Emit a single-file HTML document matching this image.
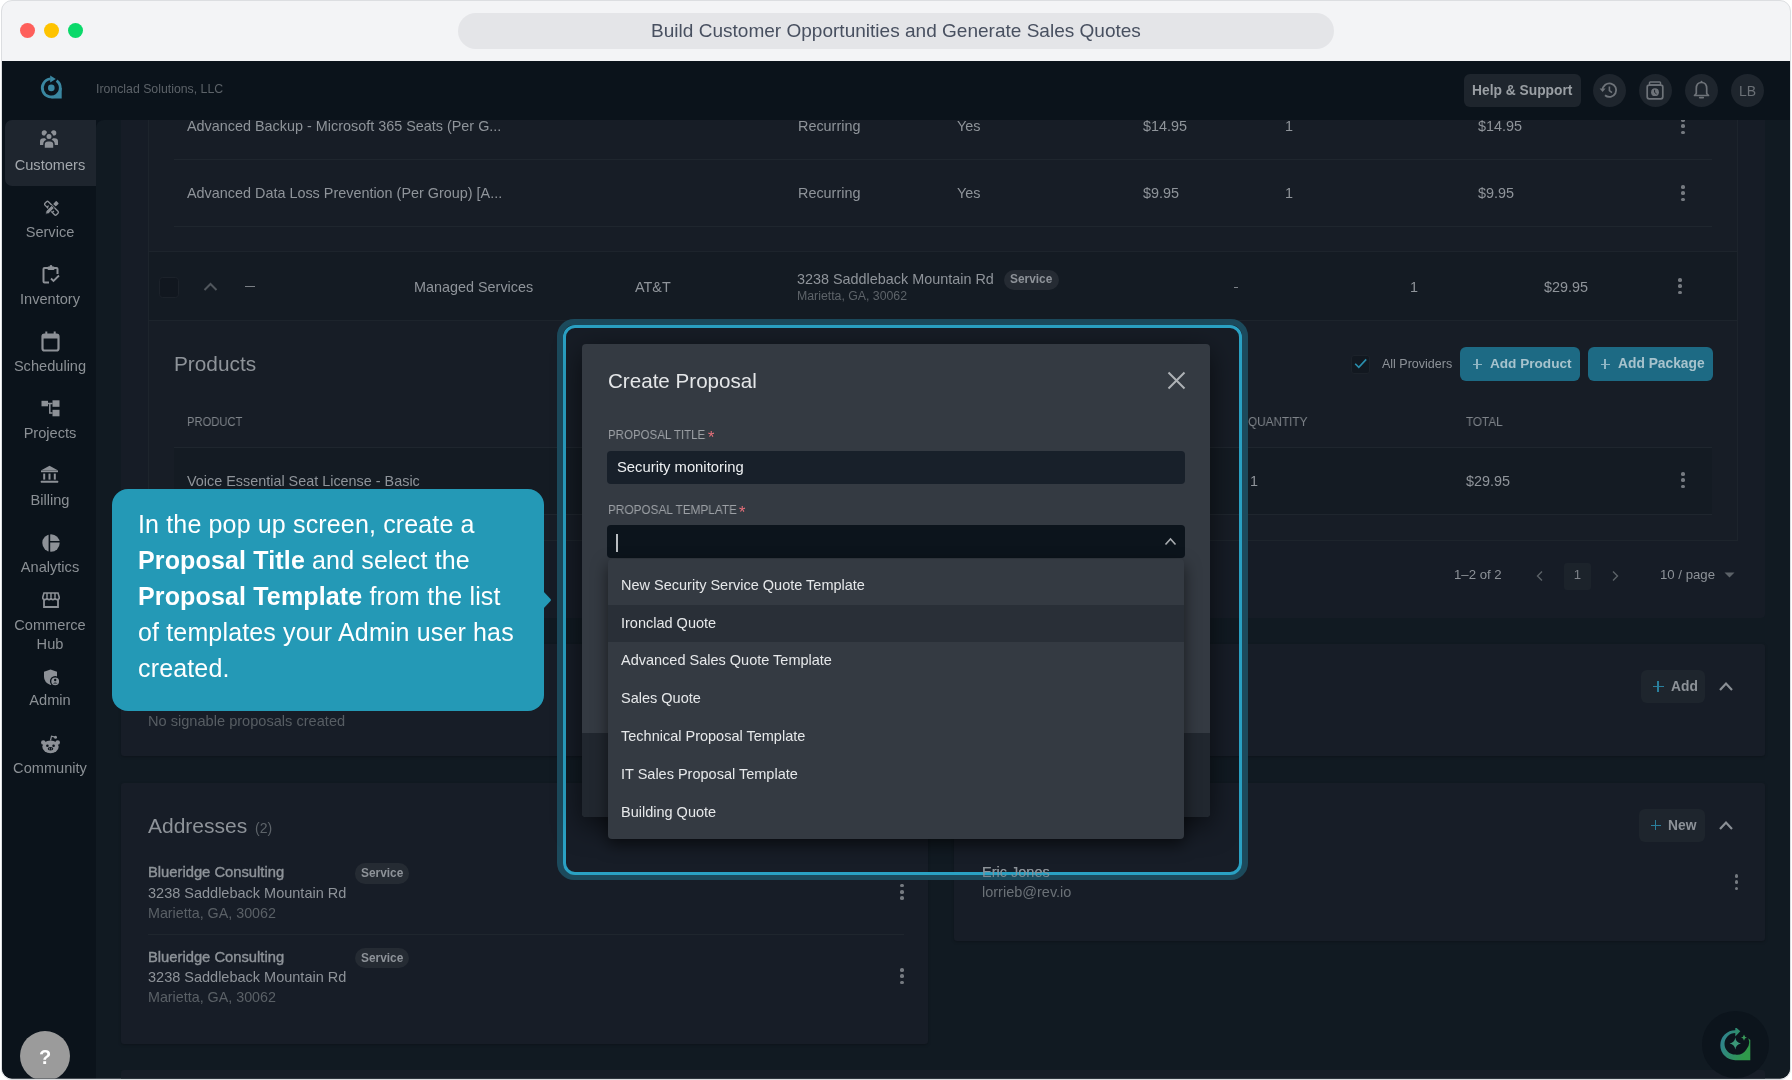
<!DOCTYPE html>
<html><head><meta charset="utf-8">
<style>
*{margin:0;padding:0;box-sizing:border-box}
html,body{width:1792px;height:1080px;overflow:hidden;background:#fff;font-family:"Liberation Sans",sans-serif}
.a{position:absolute}
.t{position:absolute;white-space:nowrap;will-change:transform}
</style></head><body>

<div class="a" style="left:1px;top:0px;width:1790px;height:1080px;border-radius:11px;background:#f3f4f6;border:1px solid #dcdee1"></div>
<div class="a" style="left:20.0px;top:22.5px;width:15px;height:15px;border-radius:50%;background:#fe5f5b"></div>
<div class="a" style="left:44.0px;top:22.5px;width:15px;height:15px;border-radius:50%;background:#fec300"></div>
<div class="a" style="left:68.0px;top:22.5px;width:15px;height:15px;border-radius:50%;background:#0ad96a"></div>
<div class="a" style="left:458px;top:13px;width:876px;height:36px;background:#e4e5e8;border-radius:18px;"></div>
<div class="t" style="left:546.0px;width:700px;text-align:center;top:17.10px;font-size:19.05px;line-height:27px;color:#485060;">Build Customer Opportunities and Generate Sales Quotes</div>
<div class="a" style="left:0;top:0;width:1792px;height:1080px;overflow:hidden;clip-path:inset(61px 2px 1.5px 2px round 0 0 10px 10px);background:#0b131b">
<div class="a" style="left:96px;top:120px;width:1696px;height:960px;background:#111a22;border-radius:0px;border-top-left-radius:8px"></div>
<div class="a" style="left:121px;top:100px;width:1644px;height:518px;background:#161c26;border-radius:4px;"></div>
<div class="a" style="left:148px;top:100px;width:1590px;height:152px;background:#171d26;border-radius:0px;border:1px solid #1d242c;border-top:none"></div>
<div class="t" style="left:186.6px;top:116.01px;font-size:14.4px;line-height:20px;color:#8f949a;">Advanced Backup - Microsoft 365 Seats (Per G...</div>
<div class="t" style="left:798px;top:116.01px;font-size:14.4px;line-height:20px;color:#8f949a;">Recurring</div>
<div class="t" style="left:957px;top:116.01px;font-size:14.4px;line-height:20px;color:#8f949a;">Yes</div>
<div class="t" style="left:1143px;top:116.01px;font-size:14.4px;line-height:20px;color:#8f949a;">$14.95</div>
<div class="t" style="left:1285px;top:116.01px;font-size:14.4px;line-height:20px;color:#8f949a;">1</div>
<div class="t" style="left:1478px;top:116.01px;font-size:14.4px;line-height:20px;color:#8f949a;">$14.95</div>
<div class="t" style="left:186.6px;top:183.01px;font-size:14.4px;line-height:20px;color:#8f949a;">Advanced Data Loss Prevention (Per Group) [A...</div>
<div class="t" style="left:798px;top:183.01px;font-size:14.4px;line-height:20px;color:#8f949a;">Recurring</div>
<div class="t" style="left:957px;top:183.01px;font-size:14.4px;line-height:20px;color:#8f949a;">Yes</div>
<div class="t" style="left:1143px;top:183.01px;font-size:14.4px;line-height:20px;color:#8f949a;">$9.95</div>
<div class="t" style="left:1285px;top:183.01px;font-size:14.4px;line-height:20px;color:#8f949a;">1</div>
<div class="t" style="left:1478px;top:183.01px;font-size:14.4px;line-height:20px;color:#8f949a;">$9.95</div>
<div class="a" style="left:174px;top:159px;width:1538px;height:1px;background:#1f262e;border-radius:0px;"></div>
<div class="a" style="left:174px;top:226px;width:1538px;height:1px;background:#1f262e;border-radius:0px;"></div>
<div class="a" style="left:1681.15px;top:118.15px;width:3.7px;height:3.7px;border-radius:50%;background:#757a80"></div>
<div class="a" style="left:1681.15px;top:124.45px;width:3.7px;height:3.7px;border-radius:50%;background:#757a80"></div>
<div class="a" style="left:1681.15px;top:130.75px;width:3.7px;height:3.7px;border-radius:50%;background:#757a80"></div>
<div class="a" style="left:1681.15px;top:185.15px;width:3.7px;height:3.7px;border-radius:50%;background:#757a80"></div>
<div class="a" style="left:1681.15px;top:191.45000000000002px;width:3.7px;height:3.7px;border-radius:50%;background:#757a80"></div>
<div class="a" style="left:1681.15px;top:197.75px;width:3.7px;height:3.7px;border-radius:50%;background:#757a80"></div>
<div class="a" style="left:148px;top:252px;width:1590px;height:69px;background:#141b23;border-radius:0px;border:1px solid #1d242c;border-top:none"></div>
<div class="a" style="left:158.8px;top:277.2px;width:20px;height:20.5px;background:#11171f;border-radius:3.5px;border:1px solid #1c222a"></div>
<svg class="a" style="left:203px;top:282px" width="15" height="10" viewBox="0 0 15 10"><path d="M1.5 8 L7.5 2 L13.5 8" fill="none" stroke="#50565c" stroke-width="2"/></svg>
<div class="a" style="left:244.5px;top:286.2px;width:10px;height:1.3px;background:#7a7f85;border-radius:0px;"></div>
<div class="t" style="left:414px;top:277.01px;font-size:14.4px;line-height:20px;color:#8f949a;">Managed Services</div>
<div class="t" style="left:635px;top:277.01px;font-size:14.4px;line-height:20px;color:#8f949a;">AT&amp;T</div>
<div class="t" style="left:797.3px;top:268.76px;font-size:14.4px;line-height:20px;color:#8f949a;">3238 Saddleback Mountain Rd</div>
<div class="a" style="left:1004px;top:269.5px;width:55px;height:20.5px;background:#252b33;border-radius:10px;"></div>
<div class="t" style="left:1010.4px;top:271.13px;font-size:11.9px;line-height:17px;color:#8d9298;font-weight:bold;">Service</div>
<div class="t" style="left:797.3px;top:287.94px;font-size:12.3px;line-height:17px;color:#5d6369;">Marietta, GA, 30062</div>
<div class="a" style="left:1234px;top:287px;width:3.6px;height:1.4px;background:#7d8288;border-radius:0px;"></div>
<div class="t" style="left:1409.5px;top:277.01px;font-size:14.4px;line-height:20px;color:#8f949a;">1</div>
<div class="t" style="left:1544px;top:277.01px;font-size:14.4px;line-height:20px;color:#8f949a;">$29.95</div>
<div class="a" style="left:1678.45px;top:278.15px;width:3.7px;height:3.7px;border-radius:50%;background:#757a80"></div>
<div class="a" style="left:1678.45px;top:284.45px;width:3.7px;height:3.7px;border-radius:50%;background:#757a80"></div>
<div class="a" style="left:1678.45px;top:290.75px;width:3.7px;height:3.7px;border-radius:50%;background:#757a80"></div>
<div class="a" style="left:148px;top:320px;width:1590px;height:221px;background:#171d26;border-radius:0px;border:1px solid #1d242c"></div>
<div class="t" style="left:174px;top:349.19px;font-size:20.8px;line-height:29px;color:#8e9399;">Products</div>
<div class="a" style="left:1351px;top:354.5px;width:19px;height:19px;background:#121820;border-radius:3px;border:1px solid #1c222a"></div>
<svg class="a" style="left:1351px;top:354px" width="19" height="19" viewBox="0 0 19 19"><path d="M4.2 9.8 L7.8 13.4 L15.2 5.4" fill="none" stroke="#2a8fae" stroke-width="1.6"/></svg>
<div class="t" style="left:1381.7px;top:354.67px;font-size:12.5px;line-height:18px;color:#8d9298;">All Providers</div>
<div class="a" style="left:1460px;top:347px;width:120px;height:34px;background:#1d6a84;border-radius:6px;"></div>
<div class="a" style="left:1588px;top:347px;width:124.5px;height:34px;background:#1d6a84;border-radius:6px;"></div>
<div class="a" style="left:1472.5px;top:363.5px;width:9.5px;height:1.8px;background:#8fb6c4;border-radius:0px;"></div>
<div class="a" style="left:1476.4px;top:359px;width:1.8px;height:10px;background:#8fb6c4;border-radius:0px;"></div>
<div class="a" style="left:1600.5px;top:363.5px;width:9.5px;height:1.8px;background:#8fb6c4;border-radius:0px;"></div>
<div class="a" style="left:1604.4px;top:359px;width:1.8px;height:10px;background:#8fb6c4;border-radius:0px;"></div>
<div class="t" style="left:1489.7px;top:354.49px;font-size:13.6px;line-height:19px;color:#a7c3cd;font-weight:bold;">Add Product</div>
<div class="t" style="left:1617.5px;top:354.42px;font-size:13.8px;line-height:19px;color:#a7c3cd;font-weight:bold;">Add Package</div>
<div class="t" style="left:186.6px;top:412.86px;font-size:12.8px;line-height:18px;color:#7f848a;transform:scaleX(0.875);transform-origin:0 0;">PRODUCT</div>
<div class="t" style="left:1248.4px;top:412.86px;font-size:12.8px;line-height:18px;color:#7f848a;transform:scaleX(0.918);transform-origin:0 0;">QUANTITY</div>
<div class="t" style="left:1466px;top:412.86px;font-size:12.8px;line-height:18px;color:#7f848a;transform:scaleX(0.913);transform-origin:0 0;">TOTAL</div>
<div class="a" style="left:174px;top:447px;width:1538px;height:1px;background:#1f262e;border-radius:0px;"></div>
<div class="a" style="left:174px;top:448px;width:1538px;height:66px;background:#141b23;border-radius:0px;"></div>
<div class="a" style="left:174px;top:514px;width:1538px;height:1px;background:#1f262e;border-radius:0px;"></div>
<div class="t" style="left:186.6px;top:471.01px;font-size:14.4px;line-height:20px;color:#8f949a;">Voice Essential Seat License - Basic</div>
<div class="t" style="left:1249.8px;top:471.01px;font-size:14.4px;line-height:20px;color:#8f949a;">1</div>
<div class="t" style="left:1466px;top:471.01px;font-size:14.4px;line-height:20px;color:#8f949a;">$29.95</div>
<div class="a" style="left:1681.15px;top:472.15px;width:3.7px;height:3.7px;border-radius:50%;background:#757a80"></div>
<div class="a" style="left:1681.15px;top:478.45px;width:3.7px;height:3.7px;border-radius:50%;background:#757a80"></div>
<div class="a" style="left:1681.15px;top:484.75px;width:3.7px;height:3.7px;border-radius:50%;background:#757a80"></div>
<div class="t" style="left:1453.5px;top:566.43px;font-size:13.2px;line-height:18px;color:#8d9298;">1–2 of 2</div>
<svg class="a" style="left:1535px;top:570px" width="10" height="12" viewBox="0 0 10 12"><path d="M7 1.5 L2.5 6 L7 10.5" fill="none" stroke="#5c6268" stroke-width="1.4"/></svg>
<div class="a" style="left:1564px;top:562.5px;width:27px;height:27px;background:#1c232b;border-radius:3px;"></div>
<div class="t" style="left:1563.5px;width:27px;text-align:center;top:566.43px;font-size:13.2px;line-height:18px;color:#7e8389;">1</div>
<svg class="a" style="left:1610px;top:570px" width="10" height="12" viewBox="0 0 10 12"><path d="M3 1.5 L7.5 6 L3 10.5" fill="none" stroke="#5c6268" stroke-width="1.4"/></svg>
<div class="t" style="left:1660px;top:566.43px;font-size:13.2px;line-height:18px;color:#8d9298;">10 / page</div>
<svg class="a" style="left:1724px;top:572px" width="11" height="6" viewBox="0 0 11 6"><path d="M0.5 0.5 L10.5 0.5 L5.5 5.5 Z" fill="#5c6268"/></svg>
<div class="a" style="left:121px;top:643.6px;width:1644px;height:112px;background:#171d27;border-radius:3px;box-shadow:0 1px 3px rgba(0,0,0,0.25)"></div>
<div class="t" style="left:148px;top:711.44px;font-size:14.6px;line-height:20px;color:#575d63;">No signable proposals created</div>
<div class="a" style="left:1641.4px;top:670px;width:64px;height:33.3px;background:#1e252d;border-radius:6px;"></div>
<div class="a" style="left:1652.8px;top:685.5px;width:10.8px;height:1.6px;background:#2a7f9c;border-radius:0px;"></div>
<div class="a" style="left:1657.4px;top:681px;width:1.6px;height:10.8px;background:#2a7f9c;border-radius:0px;"></div>
<div class="t" style="left:1670.7px;top:677.32px;font-size:13.8px;line-height:19px;color:#8d9298;font-weight:bold;">Add</div>
<svg class="a" style="left:1718px;top:680px" width="16" height="12" viewBox="0 0 16 12"><path d="M2 10 L8 3.5 L14 10" fill="none" stroke="#8a8f95" stroke-width="2.2"/></svg>
<div class="a" style="left:121px;top:782.8px;width:807px;height:261px;background:#171d27;border-radius:3px;box-shadow:0 1px 3px rgba(0,0,0,0.25)"></div>
<div class="t" style="left:148px;top:811.47px;font-size:21px;line-height:29px;color:#8e9399;">Addresses</div>
<div class="t" style="left:255px;top:818.40px;font-size:14px;line-height:20px;color:#5d6369;">(2)</div>
<div class="t" style="left:148px;top:862.39px;font-size:14.75px;line-height:21px;color:#8e9399;-webkit-text-stroke:0.4px #8e9399">Blueridge Consulting</div>
<div class="a" style="left:355px;top:863.25px;width:54px;height:20.5px;background:#252b33;border-radius:10px;"></div>
<div class="t" style="left:361px;top:865.38px;font-size:11.9px;line-height:17px;color:#8d9298;font-weight:bold;">Service</div>
<div class="t" style="left:148px;top:882.98px;font-size:14.5px;line-height:20px;color:#8e9399;">3238 Saddleback Mountain Rd</div>
<div class="t" style="left:148px;top:902.55px;font-size:14.3px;line-height:20px;color:#5a6066;">Marietta, GA, 30062</div>
<div class="a" style="left:900.15px;top:883.65px;width:3.7px;height:3.7px;border-radius:50%;background:#757a80"></div>
<div class="a" style="left:900.15px;top:889.9499999999999px;width:3.7px;height:3.7px;border-radius:50%;background:#757a80"></div>
<div class="a" style="left:900.15px;top:896.25px;width:3.7px;height:3.7px;border-radius:50%;background:#757a80"></div>
<div class="t" style="left:148px;top:946.89px;font-size:14.75px;line-height:21px;color:#8e9399;-webkit-text-stroke:0.4px #8e9399">Blueridge Consulting</div>
<div class="a" style="left:355px;top:947.75px;width:54px;height:20.5px;background:#252b33;border-radius:10px;"></div>
<div class="t" style="left:361px;top:949.88px;font-size:11.9px;line-height:17px;color:#8d9298;font-weight:bold;">Service</div>
<div class="t" style="left:148px;top:967.48px;font-size:14.5px;line-height:20px;color:#8e9399;">3238 Saddleback Mountain Rd</div>
<div class="t" style="left:148px;top:987.05px;font-size:14.3px;line-height:20px;color:#5a6066;">Marietta, GA, 30062</div>
<div class="a" style="left:900.15px;top:968.15px;width:3.7px;height:3.7px;border-radius:50%;background:#757a80"></div>
<div class="a" style="left:900.15px;top:974.4499999999999px;width:3.7px;height:3.7px;border-radius:50%;background:#757a80"></div>
<div class="a" style="left:900.15px;top:980.75px;width:3.7px;height:3.7px;border-radius:50%;background:#757a80"></div>
<div class="a" style="left:148px;top:934px;width:756px;height:1px;background:#1f262e;border-radius:0px;"></div>
<div class="a" style="left:954px;top:782.8px;width:811px;height:158px;background:#171d27;border-radius:3px;box-shadow:0 1px 3px rgba(0,0,0,0.25)"></div>
<div class="a" style="left:1639px;top:809px;width:66px;height:33px;background:#1e252d;border-radius:6px;"></div>
<div class="a" style="left:1650.7px;top:824.5px;width:10px;height:1.6px;background:#2a7f9c;border-radius:0px;"></div>
<div class="a" style="left:1654.9px;top:820px;width:1.6px;height:10px;background:#2a7f9c;border-radius:0px;"></div>
<div class="t" style="left:1668.3px;top:815.62px;font-size:13.8px;line-height:19px;color:#8d9298;font-weight:bold;">New</div>
<svg class="a" style="left:1718px;top:819px" width="16" height="12" viewBox="0 0 16 12"><path d="M2 10 L8 3.5 L14 10" fill="none" stroke="#8a8f95" stroke-width="2.2"/></svg>
<div class="t" style="left:982px;top:862.28px;font-size:14.5px;line-height:20px;color:#8e9399;">Eric Jones</div>
<div class="t" style="left:982px;top:881.98px;font-size:14.5px;line-height:20px;color:#6b7177;">lorrieb@rev.io</div>
<div class="a" style="left:1734.75px;top:874.15px;width:3.7px;height:3.7px;border-radius:50%;background:#757a80"></div>
<div class="a" style="left:1734.75px;top:880.4499999999999px;width:3.7px;height:3.7px;border-radius:50%;background:#757a80"></div>
<div class="a" style="left:1734.75px;top:886.75px;width:3.7px;height:3.7px;border-radius:50%;background:#757a80"></div>
<div class="a" style="left:121px;top:1070px;width:1644px;height:20px;background:#171d27;border-radius:3px;"></div>
<div class="a" style="left:557.2px;top:319.4px;width:691px;height:560.6px;border-radius:17px;border:6px solid #1c4a5c"></div>
<div class="a" style="left:563px;top:325.2px;width:679.3px;height:549.8px;border-radius:12px;border:3.4px solid #2aa1c3"></div>
<div class="a" style="left:582px;top:343.5px;width:628px;height:473px;background:#343a42;border-radius:4px;box-shadow:0 8px 28px rgba(0,0,0,0.6)"></div>
<div class="a" style="left:582px;top:733px;width:628px;height:83.5px;background:#21272f;border-radius:0 0 4px 4px"></div>
<div class="t" style="left:607.6px;top:366.06px;font-size:20.6px;line-height:29px;color:#e4e6e8;">Create Proposal</div>
<svg class="a" style="left:1166px;top:370px" width="21" height="21" viewBox="0 0 21 21"><path d="M2.5 2.5 L18.5 18.5 M18.5 2.5 L2.5 18.5" fill="none" stroke="#aeb2b6" stroke-width="2"/></svg>
<div class="t" style="left:607.6px;top:425.83px;font-size:12.9px;line-height:18px;color:#9ca0a5;transform:scaleX(0.893);transform-origin:0 0;">PROPOSAL TITLE</div>
<div class="t" style="left:708.3px;top:425.98px;font-size:16.5px;line-height:23px;color:#e5707a;">*</div>
<div class="a" style="left:607px;top:451px;width:578px;height:33px;background:#18202a;border-radius:4px;"></div>
<div class="t" style="left:616.8px;top:457.17px;font-size:14.8px;line-height:21px;color:#eef0f2;">Security monitoring</div>
<div class="t" style="left:607.6px;top:500.83px;font-size:12.9px;line-height:18px;color:#9ca0a5;transform:scaleX(0.915);transform-origin:0 0;">PROPOSAL TEMPLATE</div>
<div class="t" style="left:739.3px;top:500.98px;font-size:16.5px;line-height:23px;color:#e5707a;">*</div>
<div class="a" style="left:607px;top:525.2px;width:578px;height:33px;background:#0c141c;border-radius:4px;"></div>
<div class="a" style="left:616.3px;top:533.5px;width:1.6px;height:18px;background:#b9bdc1;border-radius:0px;"></div>
<svg class="a" style="left:1164px;top:537px" width="13" height="9" viewBox="0 0 13 9"><path d="M1.5 7.5 L6.5 2 L11.5 7.5" fill="none" stroke="#a8acb0" stroke-width="1.6"/></svg>
<div class="a" style="left:608px;top:559px;width:576px;height:279.5px;background:#343a42;border-radius:4px;box-shadow:0 6px 16px rgba(0,0,0,0.55)"></div>
<div class="a" style="left:608px;top:604.7px;width:576px;height:37px;background:#292f37;border-radius:0px;"></div>
<div class="t" style="left:621.2px;top:574.88px;font-size:14.5px;line-height:20px;color:#e6e8ea;">New Security Service Quote Template</div>
<div class="t" style="left:621.2px;top:612.68px;font-size:14.5px;line-height:20px;color:#e6e8ea;">Ironclad Quote</div>
<div class="t" style="left:621.2px;top:650.48px;font-size:14.5px;line-height:20px;color:#e6e8ea;">Advanced Sales Quote Template</div>
<div class="t" style="left:621.2px;top:688.28px;font-size:14.5px;line-height:20px;color:#e6e8ea;">Sales Quote</div>
<div class="t" style="left:621.2px;top:726.08px;font-size:14.5px;line-height:20px;color:#e6e8ea;">Technical Proposal Template</div>
<div class="t" style="left:621.2px;top:763.88px;font-size:14.5px;line-height:20px;color:#e6e8ea;">IT Sales Proposal Template</div>
<div class="t" style="left:621.2px;top:801.68px;font-size:14.5px;line-height:20px;color:#e6e8ea;">Building Quote</div>
<div class="a" style="left:112px;top:489px;width:432px;height:222px;border-radius:16px;background:#2499b6"></div>
<svg class="a" style="left:543px;top:590px" width="10" height="20" viewBox="0 0 10 20"><path d="M0 1 L7.5 9 Q8.5 10 7.5 11 L0 19 Z" fill="#2499b6"/></svg>
<div class="t" style="left:137.6px;top:506.94px;font-size:25px;line-height:35px;color:#ffffff;letter-spacing:0.15px;">In the pop up screen, create a</div>
<div class="t" style="left:137.6px;top:542.94px;font-size:25px;line-height:35px;color:#ffffff;letter-spacing:0.15px;"><b>Proposal Title</b> and select the</div>
<div class="t" style="left:137.6px;top:578.94px;font-size:25px;line-height:35px;color:#ffffff;letter-spacing:0.15px;"><b>Proposal Template</b> from the list</div>
<div class="t" style="left:137.6px;top:614.94px;font-size:25px;line-height:35px;color:#ffffff;letter-spacing:0.15px;">of templates your Admin user has</div>
<div class="t" style="left:137.6px;top:650.94px;font-size:25px;line-height:35px;color:#ffffff;letter-spacing:0.15px;">created.</div>
<div class="t" style="left:982px;top:862.28px;font-size:14.5px;line-height:20px;color:#8e9399;opacity:0.85">Eric Jones</div>
<div class="a" style="left:0px;top:61px;width:1792px;height:59px;background:#0b131b;border-radius:0px;"></div>
<svg class="a" style="left:38px;top:74px" width="26" height="26" viewBox="0 0 26 26">
<path d="M18.59 6.62 A9 9 0 1 1 12.52 4.93" fill="none" stroke="#3a87a1" stroke-width="2.8"/>
<path d="M12.2 1.4 L17.8 4.95 L12.2 8.5 Z" fill="#3a87a1"/>
<path d="M22.3 13.9 L23.7 13.9 L23.7 24.6 L13.3 24.6 L13.3 22.9 A9 9 0 0 0 22.3 13.9 Z" fill="#3a87a1"/>
<circle cx="13.3" cy="13.9" r="3.3" fill="#3a87a1"/></svg>
<div class="t" style="left:96px;top:80.74px;font-size:12.3px;line-height:17px;color:#5c6268;">Ironclad Solutions, LLC</div>
<div class="a" style="left:1464px;top:73.6px;width:116.5px;height:33px;background:#1e252d;border-radius:6px;"></div>
<div class="t" style="left:1472px;top:81.02px;font-size:13.8px;line-height:19px;color:#9a9fa4;font-weight:bold;">Help &amp; Support</div>
<div class="a" style="left:1593.0px;top:73.6px;width:33px;height:33px;border-radius:50%;background:#1e252d"></div>
<div class="a" style="left:1639.0px;top:73.6px;width:33px;height:33px;border-radius:50%;background:#1e252d"></div>
<div class="a" style="left:1685.0px;top:73.6px;width:33px;height:33px;border-radius:50%;background:#1e252d"></div>
<div class="a" style="left:1731.0px;top:73.6px;width:33px;height:33px;border-radius:50%;background:#1e252d"></div>
<div class="t" style="left:1731.0px;width:33px;text-align:center;top:80.65px;font-size:14px;line-height:20px;color:#6b7076;">LB</div>
<div class="a" style="left:2px;top:120px;width:94px;height:960px;background:#0b131b;border-radius:0px;"></div>
<div class="a" style="left:5px;top:120px;width:91px;height:66px;background:#1e252e;border-radius:0px;border-radius:7px 0 0 7px"></div>
<div class="t" style="left:3.0px;width:94px;text-align:center;top:155.34px;font-size:14.6px;line-height:20px;color:#a3a8ad;">Customers</div>
<div class="t" style="left:3.0px;width:94px;text-align:center;top:221.94px;font-size:14.6px;line-height:20px;color:#8b9095;">Service</div>
<div class="t" style="left:3.0px;width:94px;text-align:center;top:288.94px;font-size:14.6px;line-height:20px;color:#8b9095;">Inventory</div>
<div class="t" style="left:3.0px;width:94px;text-align:center;top:355.94px;font-size:14.6px;line-height:20px;color:#8b9095;">Scheduling</div>
<div class="t" style="left:3.0px;width:94px;text-align:center;top:422.54px;font-size:14.6px;line-height:20px;color:#8b9095;">Projects</div>
<div class="t" style="left:3.0px;width:94px;text-align:center;top:489.94px;font-size:14.6px;line-height:20px;color:#8b9095;">Billing</div>
<div class="t" style="left:3.0px;width:94px;text-align:center;top:556.94px;font-size:14.6px;line-height:20px;color:#8b9095;">Analytics</div>
<div class="t" style="left:3.0px;width:94px;text-align:center;top:614.94px;font-size:14.6px;line-height:20px;color:#8b9095;">Commerce</div>
<div class="t" style="left:3.0px;width:94px;text-align:center;top:633.69px;font-size:14.6px;line-height:20px;color:#8b9095;">Hub</div>
<div class="t" style="left:3.0px;width:94px;text-align:center;top:690.44px;font-size:14.6px;line-height:20px;color:#8b9095;">Admin</div>
<div class="t" style="left:3.0px;width:94px;text-align:center;top:757.94px;font-size:14.6px;line-height:20px;color:#8b9095;">Community</div>
<svg class="a" style="left:40px;top:130px" width="18" height="18" viewBox="0 0 18 18">
<circle cx="4.3" cy="2.9" r="2.6" fill="#8d9197"/><circle cx="13.7" cy="2.9" r="2.6" fill="#8d9197"/>
<path d="M0 15 L0 11.5 Q0 8.2 3.5 8.2 L6 8.2 Q9 8.2 9 11.5 L9 15 Z" fill="#8d9197"/>
<path d="M9 15 L9 11.5 Q9 8.2 12 8.2 L14.5 8.2 Q18 8.2 18 11.5 L18 15 Z" fill="#8d9197"/>
<circle cx="9" cy="6.6" r="3.3" fill="#8d9197" stroke="#1e252e" stroke-width="1.6"/>
<path d="M4 18.5 L4 14.5 Q4 10.6 8 10.6 L10 10.6 Q14 10.6 14 14.5 L14 18.5 Z" fill="#8d9197" stroke="#1e252e" stroke-width="1.6"/>
</svg>
<svg class="a" style="left:38.6px;top:196.2px" width="24" height="24" viewBox="-3 -3 30 30">
<g transform="rotate(-45 12.6 12.3)"><rect x="9.6" y="2.2" width="6" height="20.2" rx="1.6" fill="none" stroke="#8d9197" stroke-width="1.7"/>
<path d="M9.6 7.5 h2.8 M9.6 16.8 h2.8" stroke="#8d9197" stroke-width="1.6"/></g>
<g transform="rotate(45 12.6 12.3)"><path d="M10.3 9.6 H14.9 V19.6 L12.6 22.8 L10.3 19.6 Z" fill="#8d9197" stroke="#0b131b" stroke-width="1"/>
<rect x="10.3" y="1.6" width="4.6" height="5.4" rx="0.8" fill="#8d9197"/></g>
</svg>
<svg class="a" style="left:42px;top:265px" width="18" height="19" viewBox="0 0 18 19">
<path d="M6 3 H2.5 Q1.5 3 1.5 4 V16.5 Q1.5 17.5 2.5 17.5 H7" fill="none" stroke="#8d9197" stroke-width="2"/>
<path d="M12 3 H14.5 Q15.5 3 15.5 4 V9" fill="none" stroke="#8d9197" stroke-width="2"/>
<rect x="5.5" y="1.5" width="7" height="3.5" rx="1" fill="#8d9197"/><circle cx="9" cy="1.3" r="1.3" fill="#8d9197"/>
<path d="M9 13.5 L11.5 16 L17 10.5" fill="none" stroke="#8d9197" stroke-width="1.8"/>
</svg>
<svg class="a" style="left:41px;top:331px" width="19" height="21" viewBox="0 0 19 21">
<rect x="1.5" y="3.5" width="16" height="16" rx="2" fill="none" stroke="#8d9197" stroke-width="2.2"/>
<rect x="1.5" y="3.5" width="16" height="4" fill="#8d9197"/>
<rect x="4.3" y="0.5" width="2" height="4" fill="#8d9197"/><rect x="12.7" y="0.5" width="2" height="4" fill="#8d9197"/>
</svg>
<svg class="a" style="left:41px;top:400px" width="19" height="17" viewBox="0 0 19 17">
<rect x="0.5" y="0.8" width="6.5" height="5.5" fill="#8d9197"/>
<rect x="11.5" y="0.3" width="7" height="6.5" fill="#8d9197"/>
<rect x="11.5" y="9.8" width="7" height="6.5" fill="#8d9197"/>
<path d="M7 3.5 H11.5 M8.8 3.5 V13 H11.5" fill="none" stroke="#8d9197" stroke-width="1.5"/>
</svg>
<svg class="a" style="left:39.5px;top:465px" width="19" height="19" viewBox="0 0 19 19">
<path d="M0.8 5.6 L9.5 0.8 L18.2 5.6 Z" fill="#8d9197"/>
<rect x="1" y="5.6" width="17" height="1.6" fill="#8d9197"/>
<rect x="3.2" y="8.6" width="2" height="6" fill="#8d9197"/><rect x="8.5" y="8.6" width="2" height="6" fill="#8d9197"/><rect x="13.8" y="8.6" width="2" height="6" fill="#8d9197"/>
<rect x="0.8" y="15.8" width="17.4" height="2" rx="0.5" fill="#8d9197"/>
</svg>
<svg class="a" style="left:41.5px;top:533.5px" width="18" height="18" viewBox="0 0 18 18">
<circle cx="9" cy="9" r="8.7" fill="#8d9197"/>
<path d="M7.4 0 V18 M7.4 7.8 H18" stroke="#0b131b" stroke-width="1.6"/>
</svg>
<svg class="a" style="left:42px;top:592px" width="18" height="16" viewBox="0 0 18 16">
<path d="M2 1 H16 L17.3 5.5 Q17.3 7.6 15.2 7.6 Q13.1 7.6 13 5.5 Q12.9 7.6 10.9 7.6 Q9 7.6 9 5.5 Q9 7.6 7.1 7.6 Q5.1 7.6 5 5.5 Q4.9 7.6 2.8 7.6 Q0.7 7.6 0.7 5.5 Z" fill="none" stroke="#8d9197" stroke-width="1.6"/>
<path d="M5 1 V5.5 M9 1 V5.5 M13 1 V5.5" stroke="#8d9197" stroke-width="1.5"/>
<path d="M2 7.5 V15 H16 V7.5" fill="none" stroke="#8d9197" stroke-width="1.8"/>
</svg>
<svg class="a" style="left:42.5px;top:668.5px" width="17" height="17" viewBox="0 0 17 17">
<path d="M7.5 0.5 L14 2.8 V8 Q14 13.3 7.5 16 Q1 13.3 1 8 V2.8 Z" fill="#8d9197"/>
<circle cx="12.2" cy="12.3" r="4.6" fill="#8d9197" stroke="#0b131b" stroke-width="1.4"/>
<circle cx="12.2" cy="11" r="1.2" fill="#0b131b"/><path d="M10 14.6 Q12.2 12.2 14.4 14.6 Z" fill="#0b131b"/>
</svg>
<svg class="a" style="left:41px;top:734.5px" width="19" height="19" viewBox="0 0 19 19">
<ellipse cx="9.5" cy="11.8" rx="8.2" ry="6.4" fill="#8d9197"/>
<circle cx="2.3" cy="7.5" r="2.3" fill="#8d9197"/><circle cx="16.7" cy="7.5" r="2.3" fill="#8d9197"/>
<path d="M9.5 5.5 L10.5 1.2 L14 2.2" fill="none" stroke="#8d9197" stroke-width="1.2"/><circle cx="14.5" cy="2.2" r="1.5" fill="#8d9197"/>
<circle cx="6.4" cy="10.8" r="1.3" fill="#0b131b"/><circle cx="12.6" cy="10.8" r="1.3" fill="#0b131b"/>
<ellipse cx="9.5" cy="13.8" rx="2.8" ry="1.8" fill="#0b131b"/><circle cx="8.5" cy="13.8" r="0.6" fill="#8d9197"/><circle cx="10.5" cy="13.8" r="0.6" fill="#8d9197"/>
</svg>
<svg class="a" style="left:1599px;top:80px" width="20" height="20" viewBox="0 0 20 20">
<path d="M3.6 10 A6.8 6.8 0 1 1 6 15.3" fill="none" stroke="#6e7379" stroke-width="1.8"/>
<path d="M0.6 8.6 L3.6 12 L6.6 8.6 Z" fill="#6e7379"/>
<path d="M10.4 6.5 V10.6 L13 12.6" fill="none" stroke="#6e7379" stroke-width="1.6"/>
</svg>
<svg class="a" style="left:1646px;top:81px" width="18" height="19" viewBox="0 0 18 19">
<rect x="1.2" y="4.2" width="15.6" height="13.6" rx="2" fill="none" stroke="#6e7379" stroke-width="1.7"/>
<rect x="3.5" y="1" width="11" height="3" rx="0.8" fill="none" stroke="#6e7379" stroke-width="1.5"/>
<circle cx="9" cy="11.2" r="3.9" fill="#6e7379"/><path d="M8.6 8.8 V11.4 L10.6 13" stroke="#1e252d" stroke-width="1" fill="none"/>
</svg>
<svg class="a" style="left:1693px;top:80px" width="17" height="20" viewBox="0 0 17 20">
<path d="M8.5 2.5 Q3.3 2.5 3.3 8.5 V13.5 L1.5 15.5 H15.5 L13.7 13.5 V8.5 Q13.7 2.5 8.5 2.5 Z" fill="none" stroke="#6e7379" stroke-width="1.7" stroke-linejoin="round"/>
<rect x="7.5" y="0.8" width="2" height="2.2" rx="1" fill="#6e7379"/>
<path d="M6.8 17.6 H10.2" stroke="#6e7379" stroke-width="1.8" stroke-linecap="round"/>
</svg>
<div class="a" style="left:19.8px;top:1031px;width:50.2px;height:50.2px;border-radius:50%;background:#9b9b9b"></div>
<div class="t" style="left:29.9px;width:30px;text-align:center;top:1042.87px;font-size:20px;line-height:28px;color:#ffffff;font-weight:bold;">?</div>
<div class="a" style="left:1702.2px;top:1011px;width:66.6px;height:66.6px;border-radius:50%;background:#0c141c"></div>
<svg class="a" style="left:1720px;top:1028px" width="31" height="33" viewBox="0 0 31 33">
<defs><linearGradient id="g1" x1="0" y1="0" x2="1" y2="0.4"><stop offset="0" stop-color="#2f7e9a"/><stop offset="1" stop-color="#2f9a4a"/></linearGradient></defs>
<path d="M15 5.2 A10.2 10.2 0 1 0 25.2 15.4 L25.2 21 L30.5 21 L30.5 32 L15 32" fill="none" stroke="url(#g1)" stroke-width="0"/>
<path d="M15.3 4.6 A11 11 0 1 0 26.3 15.6 V10 L30.5 3.8 V32.4 H15.3 A16.8 16.8 0 0 1 15.3 32.4" fill="none"/>
<path d="M15.4 5 A10.8 10.8 0 1 0 26.2 15.8 L30.2 11 L30.2 32 L15.4 32 Z M15.4 26.6 A10.8 10.8 0 0 1 15.4 5" fill="none"/>
<path d="M15.3 2.2 A13.4 13.4 0 0 0 9.6 28 A13.4 13.4 0 0 0 15.3 32 H30.3 V11.2 L28.7 10.5 A13.4 13.4 0 0 1 28.7 15.6 A13.4 13.4 0 1 1 15.3 2.2 Z" fill="none"/>
<path d="M15.3 32.2 H30.3 V12 L28.2 10.3 A10.8 10.8 0 0 1 26 22 A10.8 10.8 0 0 1 15.3 26.6 A10.8 10.8 0 0 1 15.3 5 L15.3 8.5 L20.3 3.3 L15.3 -1.2 L15.3 2.2 A13.4 13.4 0 0 0 15.3 32.2 Z" fill="url(#g1)"/>
<path d="M15.3 9.5 Q16 14.6 21 15.6 Q16 16.6 15.3 21.6 Q14.6 16.6 9.6 15.6 Q14.6 14.6 15.3 9.5 Z" fill="#3a9777"/>
<path d="M24 6.5 Q24.4 9.2 27 9.6 Q24.4 10 24 12.7 Q23.6 10 21 9.6 Q23.6 9.2 24 6.5 Z" fill="#3a9a5a"/>
</svg>
</div>
</body></html>
